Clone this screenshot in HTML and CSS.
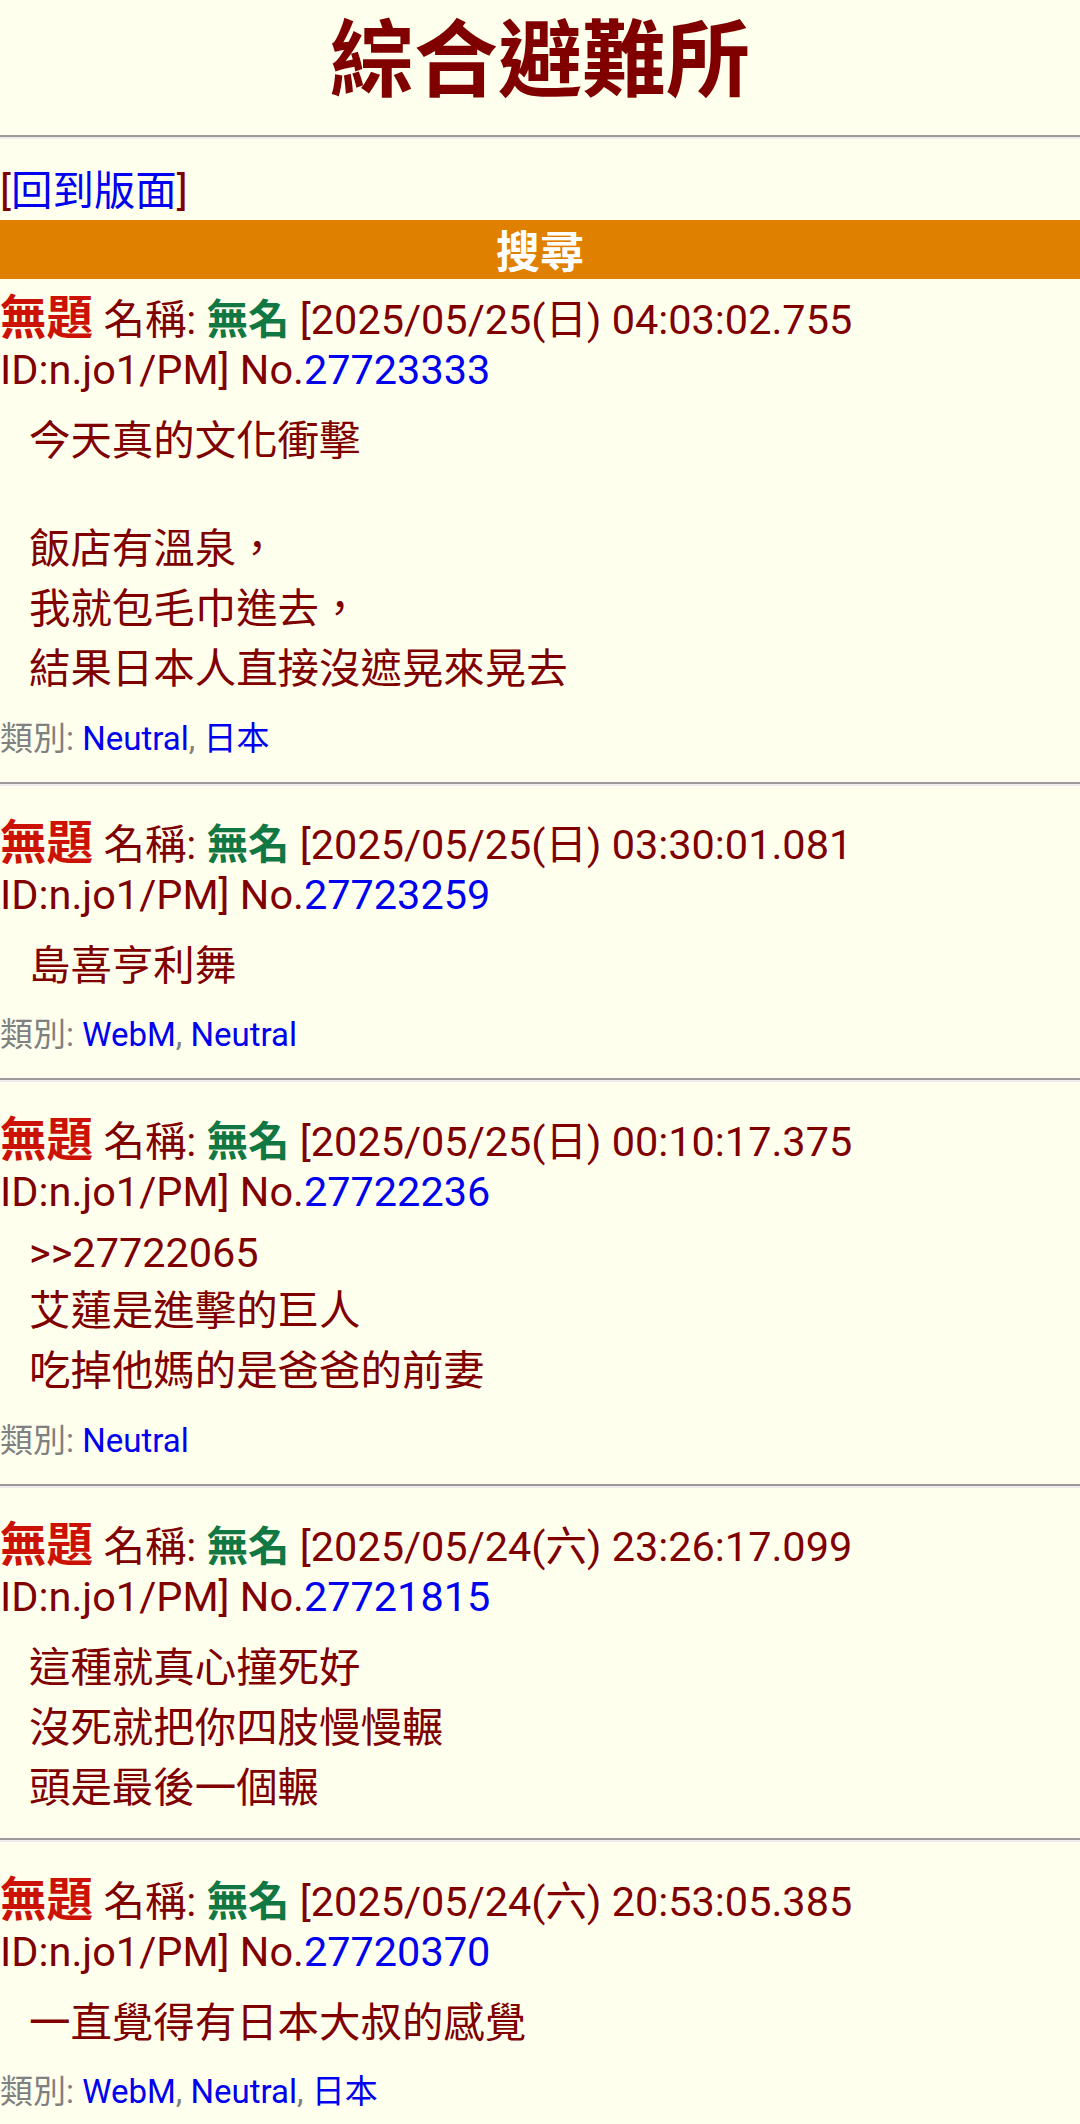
FILE: index.html
```html
<!DOCTYPE html>
<html lang="zh-Hant">
<head>
<meta charset="utf-8">
<title>綜合避難所</title>
<link rel="stylesheet" href="styles.css">
</head>
<body>
<h1 class="board-title">綜合避難所</h1>
<hr class="sep top-sep">
<div class="back">[<a href="#">回到版面</a>]</div>
<div class="bar">搜尋</div>

<div class="post">
  <div class="post-head"><span class="title">無題</span> 名稱: <span class="name">無名</span> <span class="now">[2025/05/25(日) 04:03:02.755</span> <span class="id">ID:n.jo1/PM]</span> No.<a href="#">27723333</a></div>
  <div class="quote">今天真的文化衝擊<span class="blank"></span>飯店有溫泉，<br>我就包毛巾進去，<br>結果日本人直接沒遮晃來晃去</div>
  <div class="category">類別: <a href="#">Neutral</a>, <a href="#">日本</a></div>
</div>
<hr class="sep">

<div class="post">
  <div class="post-head"><span class="title">無題</span> 名稱: <span class="name">無名</span> <span class="now">[2025/05/25(日) 03:30:01.081</span> <span class="id">ID:n.jo1/PM]</span> No.<a href="#">27723259</a></div>
  <div class="quote">島喜亨利舞</div>
  <div class="category">類別: <a href="#">WebM</a>, <a href="#">Neutral</a></div>
</div>
<hr class="sep">

<div class="post">
  <div class="post-head"><span class="title">無題</span> 名稱: <span class="name">無名</span> <span class="now">[2025/05/25(日) 00:10:17.375</span> <span class="id">ID:n.jo1/PM]</span> No.<a href="#">27722236</a></div>
  <div class="quote"><span class="resto">&gt;&gt;27722065</span>艾蓮是進擊的巨人<br>吃掉他媽的是爸爸的前妻</div>
  <div class="category">類別: <a href="#">Neutral</a></div>
</div>
<hr class="sep">

<div class="post">
  <div class="post-head"><span class="title">無題</span> 名稱: <span class="name">無名</span> <span class="now">[2025/05/24(六) 23:26:17.099</span> <span class="id">ID:n.jo1/PM]</span> No.<a href="#">27721815</a></div>
  <div class="quote">這種就真心撞死好<br>沒死就把你四肢慢慢輾<br>頭是最後一個輾</div>
</div>
<hr class="sep">

<div class="post">
  <div class="post-head"><span class="title">無題</span> 名稱: <span class="name">無名</span> <span class="now">[2025/05/24(六) 20:53:05.385</span> <span class="id">ID:n.jo1/PM]</span> No.<a href="#">27720370</a></div>
  <div class="quote">一直覺得有日本大叔的感覺</div>
  <div class="category">類別: <a href="#">WebM</a>, <a href="#">Neutral</a>, <a href="#">日本</a></div>
</div>
</body>
</html>
```
FILE: styles.css
```css
html, body {
  margin: 0;
  padding: 0;
  background: #ffffee;
}
body {
  color: #800000;
  font-family: Roboto, "Noto Sans CJK TC", sans-serif;
  font-size: 41.45px;
}
a {
  color: #0000ee;
  text-decoration: none;
}
.board-title {
  margin: 0;
  text-align: center;
  font-size: 84px;
  font-weight: bold;
  line-height: 123px;
  color: #800000;
}
.sep {
  height: 0;
  margin: 20px 0 18.7px;
  border: 0;
  border-top: 2px solid #9a9a9a;
  border-bottom: 2px solid #ececec;
}
.top-sep {
  margin: 12px 0 0;
}
.back {
  margin-top: 28px;
  line-height: 49px;
}
.bar {
  margin-top: 4px;
  height: 59px;
  box-sizing: border-box;
  padding-top: 6.9px;
  line-height: 52.1px;
  background: #e08000;
  color: #ffffff;
  text-align: center;
  font-size: 44px;
  font-weight: bold;
}
.post {
  padding-top: 16px;
}
.post-head {
  line-height: 50px;
}
.title {
  color: #cc1105;
  font-size: 46.6px;
  font-weight: bold;
  line-height: 1;
}
.name {
  color: #117743;
  font-weight: bold;
}
.id {
  white-space: nowrap;
}
.quote {
  margin: 15.7px 0 0 29px;
  line-height: 60px;
}
.resto {
  display: block;
  line-height: 48.6px;
  margin: -3.9px 0 3.9px;
}
.blank {
  display: block;
  height: 48.6px;
}
.category {
  margin-top: 16.4px;
  font-size: 33px;
  line-height: 46px;
  color: #808080;
}
```
